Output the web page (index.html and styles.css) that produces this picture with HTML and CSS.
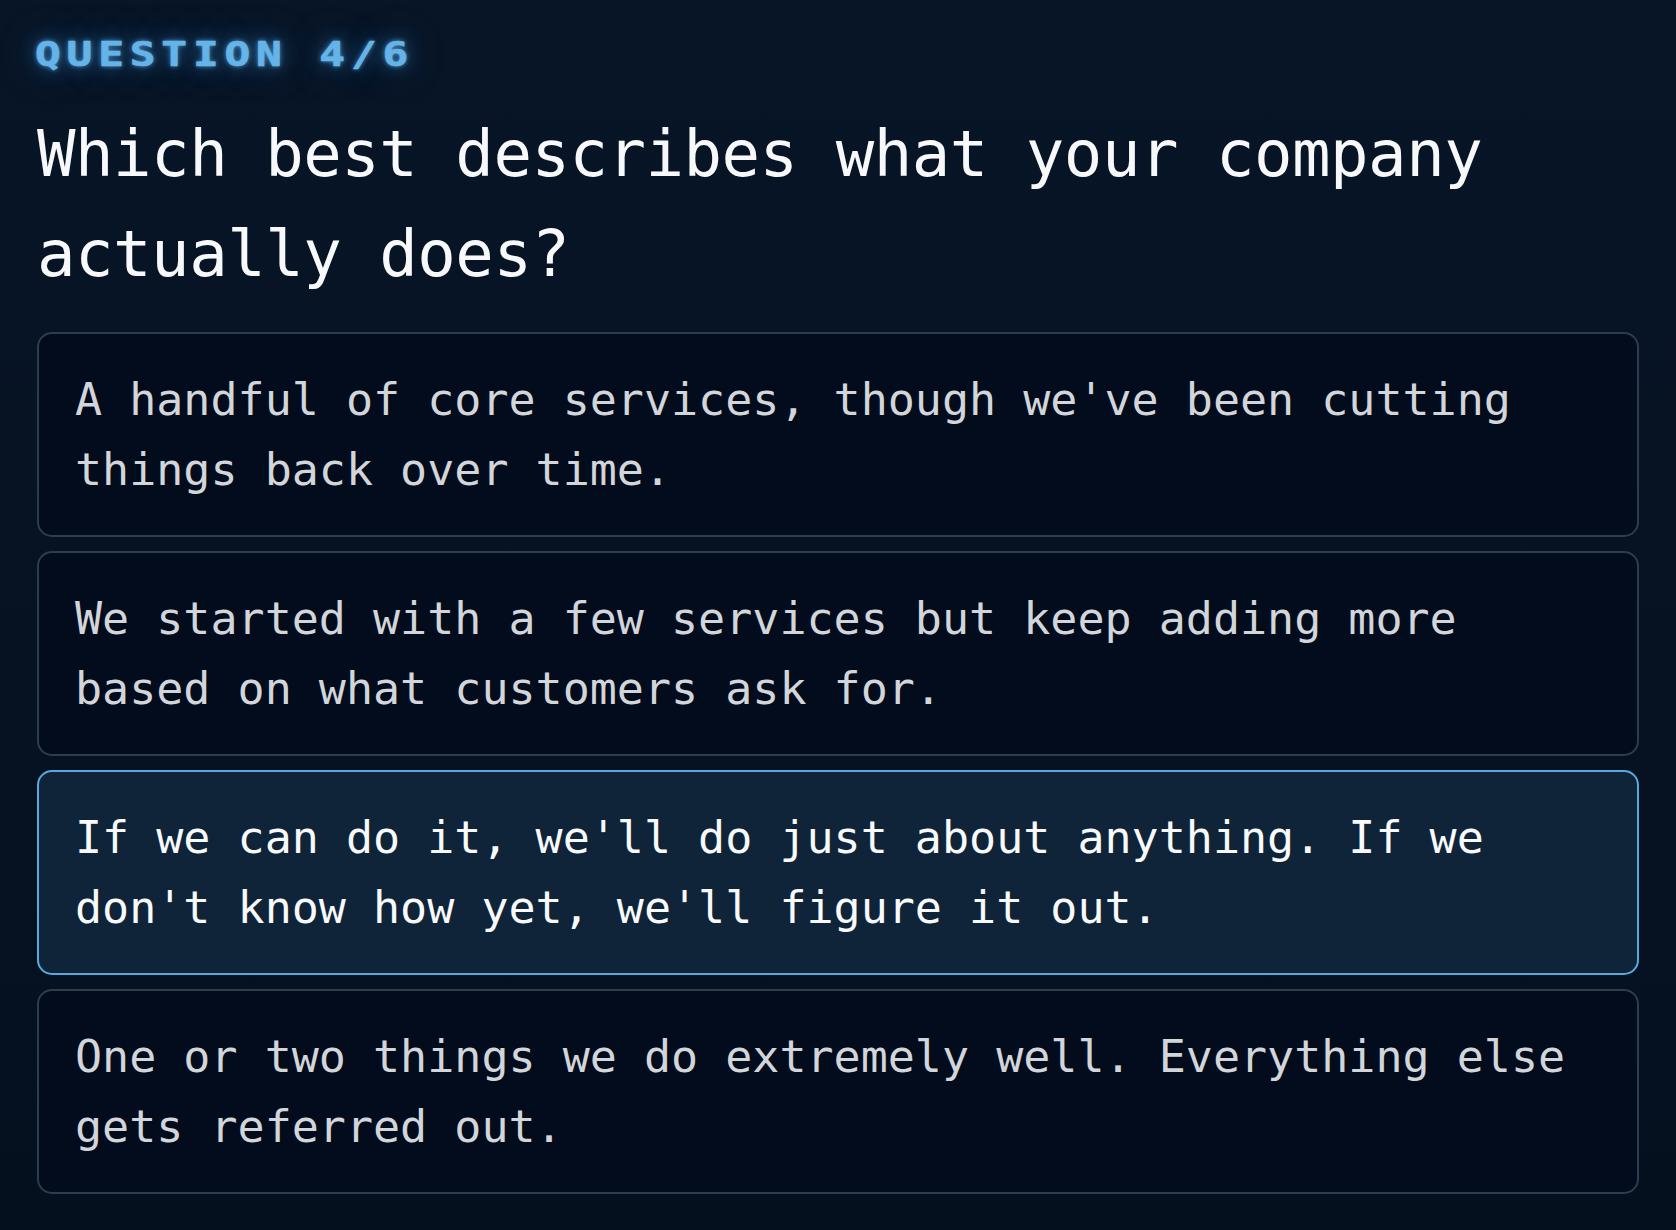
FILE: index.html
```html
<!DOCTYPE html>
<html lang="en">
<head>
<meta charset="utf-8">
<title>Question 4/6</title>
<link rel="stylesheet" href="styles.css">
</head>
<body>
<main class="page">
  <div class="label"><span class="label-text">QUESTION 4/6</span></div>
  <h1 class="question">Which best describes what your company actually does?</h1>
  <div class="options">
    <button class="option">A handful of core services, though we've been cutting things back over time.</button>
    <button class="option">We started with a few services but keep adding more based on what customers ask for.</button>
    <button class="option option--selected">If we can do it, we'll do just about anything. If we don't know how yet, we'll figure it out.</button>
    <button class="option">One or two things we do extremely well. Everything else gets referred out.</button>
  </div>
</main>
</body>
</html>
```

FILE: styles.css
```css
html, body {
  margin: 0;
  padding: 0;
}

body {
  background: linear-gradient(180deg, #081526 0%, #061222 60%, #05101f 100%);
  min-height: 1230px;
  font-family: "DejaVu Sans Mono", "Liberation Mono", monospace;
  color: #f4f6f8;
}

.page {
  padding: 37px 37px 0 37px;
  display: flex;
  flex-direction: column;
}

.label {
  height: 34px;
  margin-left: -2px;
}

.label-text {
  display: inline-block;
  transform: scaleX(1.26);
  transform-origin: left center;
  font-family: "DejaVu Sans Mono", monospace;
  font-weight: bold;
  font-size: 34px;
  line-height: 34px;
  letter-spacing: 4.6px;
  color: #65b4e8;
  -webkit-text-stroke: 0.6px #65b4e8;
  text-shadow: 0 0 5px rgba(100, 180, 240, 0.8), 0 0 16px rgba(60, 140, 210, 0.65), 0 0 36px rgba(50, 130, 200, 0.4);
}

.question {
  margin: 33px 0 0 0;
  font-family: "DejaVu Sans Mono", monospace;
  font-weight: normal;
  font-size: 64px;
  line-height: 100px;
  letter-spacing: -0.5px;
  color: #f7f8fa;
}

.options {
  margin-top: 28px;
  display: flex;
  flex-direction: column;
  gap: 14px;
}

.option {
  display: block;
  width: 100%;
  box-sizing: border-box;
  text-align: left;
  margin: 0;
  padding: 31px 30px 30px 36px;
  background: #020c1c;
  border: 2px solid #2d3c4e;
  border-radius: 15px;
  font-family: "DejaVu Sans Mono", monospace;
  font-size: 45px;
  line-height: 70px;
  color: #d2d5d9;
  cursor: pointer;
}

.option--selected {
  background: #0f2439;
  border-color: #59a9de;
  color: #f7f9fb;
}
```
